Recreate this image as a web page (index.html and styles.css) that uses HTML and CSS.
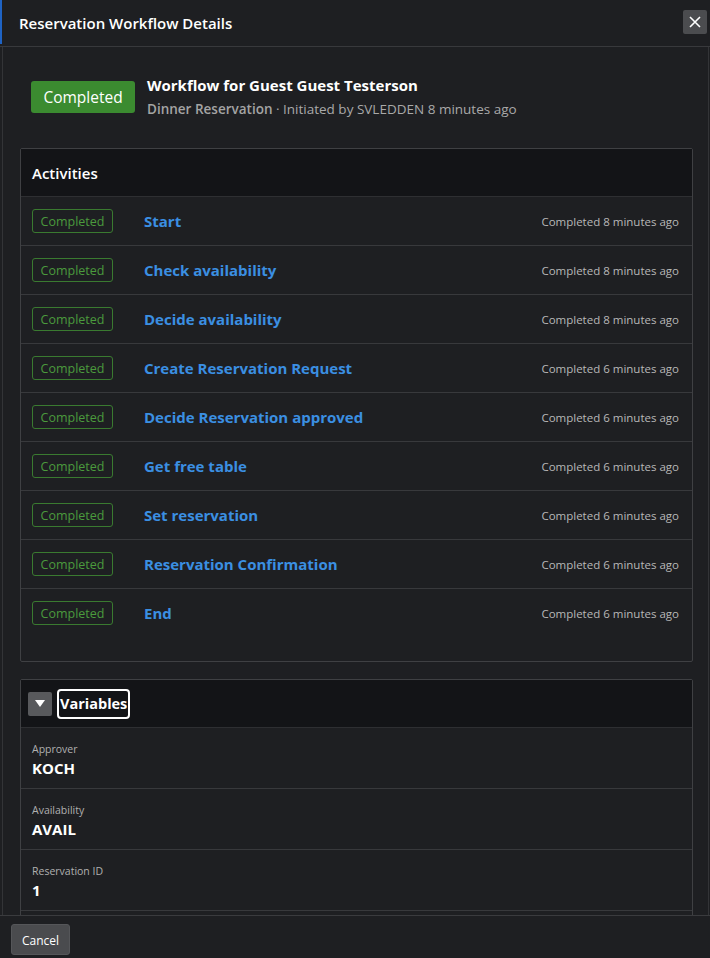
FILE: index.html
```html
<!DOCTYPE html>
<html lang="en">
<head>
<meta charset="utf-8">
<title>Reservation Workflow Details</title>
<link rel="stylesheet" href="styles.css">
</head>
<body>
<div class="modal">
  <header class="modal-header">
    <span class="accent"></span>
    <h1 class="modal-title">Reservation Workflow Details</h1>
    <button class="close-btn" aria-label="Close">
      <svg width="12" height="12" viewBox="0 0 12 12"><path d="M1 1L11 11M11 1L1 11" stroke="#fff" stroke-width="1.6" fill="none"/></svg>
    </button>
  </header>
  <div class="modal-body">
    <div class="summary">
      <span class="status-badge">Completed</span>
      <div class="summary-text">
        <div class="summary-title">Workflow for Guest Guest Testerson</div>
        <div class="summary-sub"><strong>Dinner Reservation</strong> · Initiated by SVLEDDEN 8 minutes ago</div>
      </div>
    </div>

    <section class="card">
      <div class="card-header"><span class="card-title">Activities</span></div>
      <div class="activity-list">
        <div class="activity"><span class="outline-badge">Completed</span><span class="activity-name">Start</span><span class="activity-time">Completed 8 minutes ago</span></div>
        <div class="activity"><span class="outline-badge">Completed</span><span class="activity-name">Check availability</span><span class="activity-time">Completed 8 minutes ago</span></div>
        <div class="activity"><span class="outline-badge">Completed</span><span class="activity-name">Decide availability</span><span class="activity-time">Completed 8 minutes ago</span></div>
        <div class="activity"><span class="outline-badge">Completed</span><span class="activity-name">Create Reservation Request</span><span class="activity-time">Completed 6 minutes ago</span></div>
        <div class="activity"><span class="outline-badge">Completed</span><span class="activity-name">Decide Reservation approved</span><span class="activity-time">Completed 6 minutes ago</span></div>
        <div class="activity"><span class="outline-badge">Completed</span><span class="activity-name">Get free table</span><span class="activity-time">Completed 6 minutes ago</span></div>
        <div class="activity"><span class="outline-badge">Completed</span><span class="activity-name">Set reservation</span><span class="activity-time">Completed 6 minutes ago</span></div>
        <div class="activity"><span class="outline-badge">Completed</span><span class="activity-name">Reservation Confirmation</span><span class="activity-time">Completed 6 minutes ago</span></div>
        <div class="activity"><span class="outline-badge">Completed</span><span class="activity-name">End</span><span class="activity-time">Completed 6 minutes ago</span></div>
      </div>
    </section>

    <section class="card vars">
      <div class="card-header vars-header">
        <button class="toggle-btn" aria-label="Collapse">
          <svg width="10" height="7" viewBox="0 0 10 7"><path d="M0 0H10L5 7Z" fill="#fff"/></svg>
        </button>
        <span class="vars-title">Variables</span>
      </div>
      <div class="var-row"><div class="var-label">Approver</div><div class="var-value">KOCH</div></div>
      <div class="var-row"><div class="var-label">Availability</div><div class="var-value">AVAIL</div></div>
      <div class="var-row"><div class="var-label">Reservation ID</div><div class="var-value">1</div></div>
    </section>
  </div>
  <footer class="modal-footer">
    <button class="cancel-btn">Cancel</button>
  </footer>
</div>
</body>
</html>
```

FILE: styles.css
```css
* { box-sizing: border-box; }
html, body {
  margin: 0;
  padding: 0;
  background: #1e1f22;
  height: 958px;
  overflow: hidden;
}
body {
  font-family: "Open Sans", "Noto Sans", sans-serif;
  color: #fff;
}
.modal {
  display: flex;
  flex-direction: column;
  height: 958px;
  background: #1e1f22;
}
.modal-header {
  position: relative;
  height: 47px;
  flex: 0 0 47px;
  display: flex;
  align-items: center;
  padding: 0 3px 0 19px;
  border-bottom: 1px solid #38393c;
}
.accent {
  position: absolute;
  left: 0;
  top: 0;
  width: 2px;
  height: 44px;
  background: #1f63c4;
}
.modal-title {
  flex: 1;
  margin: 0;
  font-size: 15px;
  font-weight: 600;
  color: #fff;
}
.close-btn {
  width: 24px;
  height: 24px;
  padding: 0;
  border: none;
  border-radius: 2px;
  background: #4b4c4f;
  display: flex;
  align-items: center;
  justify-content: center;
  margin-top: -3px;
}
.modal-body {
  flex: 1;
  overflow: hidden;
  margin: 0 1px 0 2px;
  border-left: 1px solid #333437;
  border-right: 1px solid #333437;
  padding: 34px 15px 0 17px;
}
.summary {
  display: flex;
  align-items: center;
  gap: 12px;
  height: 32px;
  padding-left: 11px;
  margin-bottom: 35px;
}
.status-badge {
  flex: 0 0 104px;
  height: 32px;
  border-radius: 3px;
  background: #3b8b30;
  color: #fff;
  font-size: 15.5px;
  display: flex;
  align-items: center;
  justify-content: center;
}
.summary-title {
  font-size: 15px;
  font-weight: 700;
  line-height: 24px;
}
.summary-sub {
  font-size: 13.5px;
  color: #a9a9a9;
  line-height: 24px;
}
.summary-sub strong { font-weight: 600; color: #a4a4a4; }

.card {
  border: 1px solid #3f4043;
  border-radius: 2px;
  background: #1e1f22;
}
.card-header {
  height: 48px;
  display: flex;
  align-items: center;
  padding-left: 11px;
  background: #131417;
  border-bottom: 1px solid #2e2f32;
}
.card-title {
  font-size: 15px;
  font-weight: 600;
}
.activity-list { padding-bottom: 24px; }
.activity {
  display: grid;
  grid-template-columns: 112px 1fr auto;
  align-items: center;
  height: 49px;
  padding: 0 13px 0 11px;
  border-bottom: 1px solid #38393c;
}
.activity:last-child { border-bottom: none; height: 48px; }
.outline-badge {
  width: 81px;
  height: 24px;
  border: 1px solid #3a7a30;
  border-radius: 3px;
  color: #4b9a3d;
  font-size: 12.5px;
  display: flex;
  align-items: center;
  justify-content: center;
}
.activity-name {
  color: #3b8fe2;
  font-weight: 700;
  font-size: 15px;
}
.activity-time {
  color: #b8b8b8;
  font-size: 11.5px;
}
.vars { margin-top: 17px; padding-bottom: 20px; }
.vars-header {
  padding-left: 7px;
  gap: 5px;
  border-bottom: 1px solid #2e2f32;
}
.toggle-btn {
  width: 24px;
  height: 24px;
  padding: 0;
  border: none;
  border-radius: 2px;
  background: #58595c;
  display: flex;
  align-items: center;
  justify-content: center;
}
.vars-title {
  height: 30px;
  padding: 0 1px;
  border: 2px solid #fff;
  border-radius: 4px;
  font-size: 14.5px;
  font-weight: 700;
  display: flex;
  align-items: center;
}
.var-row {
  height: 61px;
  padding: 14px 11px 0;
  border-bottom: 1px solid #38393c;
}
.var-label {
  font-size: 10.5px;
  color: #b0b0b0;
  line-height: 15px;
}
.var-value {
  font-size: 15px;
  font-weight: 700;
  line-height: 22px;
}
.modal-footer {
  flex: 0 0 43px;
  border-top: 1px solid #3a3b3e;
  padding: 8px 11px 0;
}
.cancel-btn {
  height: 31px;
  padding: 0 10px;
  border: 1px solid #555659;
  border-radius: 3px;
  background: #4a4b4e;
  color: #fff;
  font-family: "Open Sans", "Noto Sans", sans-serif;
  font-size: 12px;
  padding-top: 1px;
}
```
